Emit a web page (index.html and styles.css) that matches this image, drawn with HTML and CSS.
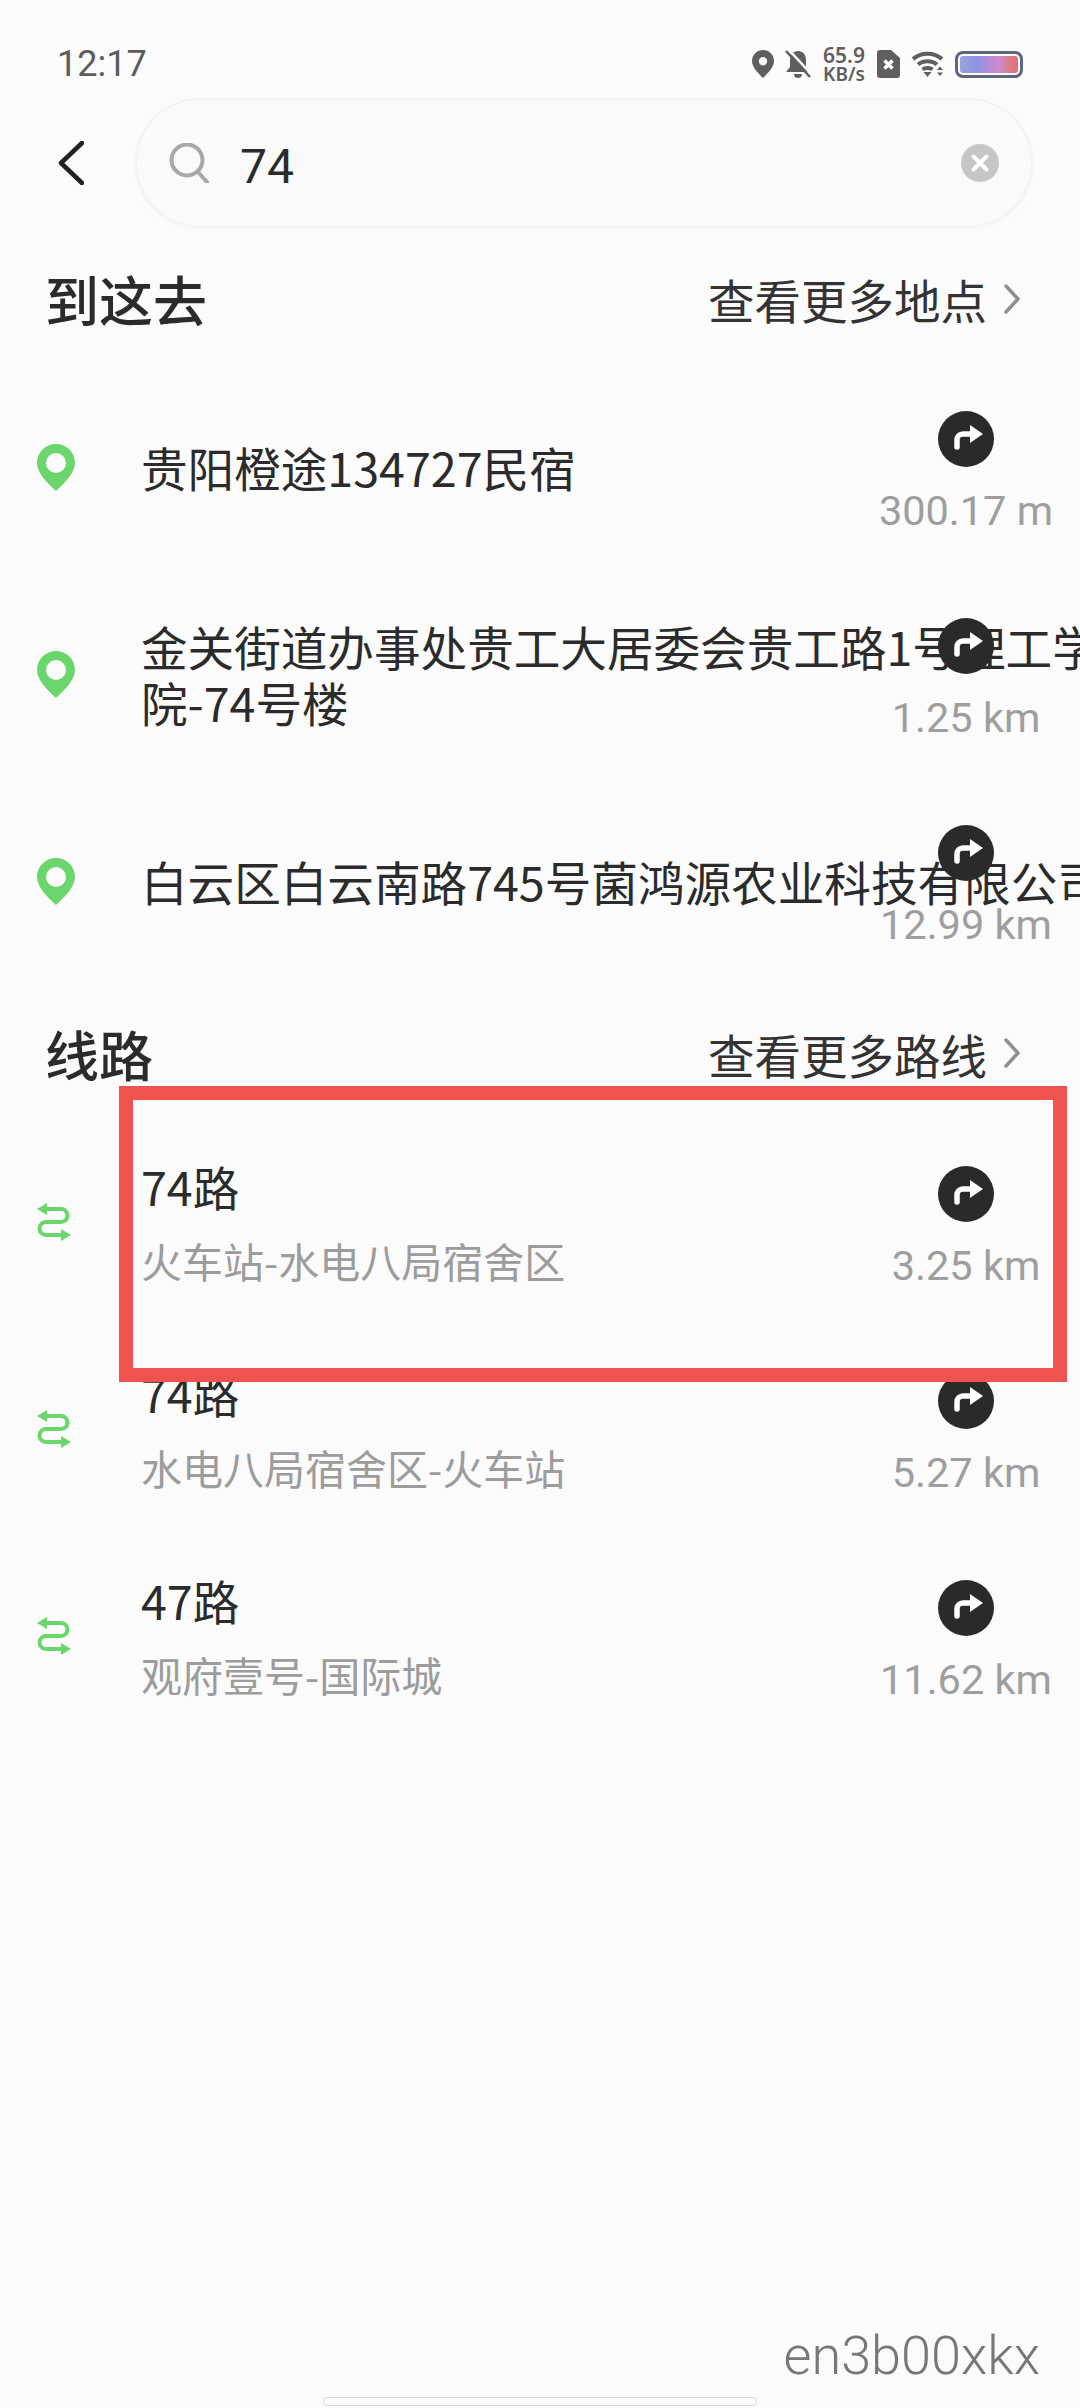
FILE: index.html
```html
<!DOCTYPE html>
<html lang="zh-CN">
<head>
  <meta charset="UTF-8" />
  <meta name="viewport" content="width=device-width, initial-scale=1" />
  <title>搜索</title>
  <link rel="stylesheet" href="styles.css">
</head>
<body>

  <svg class="sprites" width="0" height="0">
    <symbol id="pin" viewBox="0 0 38 47">
      <path fill-rule="evenodd" d="M19 0C8.5 0 0 8.2 0 18.8 0 30 12.5 41 19 47c6.5-6 19-17 19-28.2C38 8.2 29.5 0 19 0zm0 9a10 10 0 1 1 0 20 10 10 0 0 1 0-20z"/>
    </symbol>
    <symbol id="swap" viewBox="0 0 34 38">
      <path class="swap-line" d="M8 6h16a6.5 6.5 0 0 1 0 13H9a6.5 6.5 0 0 0 0 13h16"/>
      <path d="M0 6l10-6v12zM34 32l-10-6v12z"/>
    </symbol>
    <symbol id="go" viewBox="0 0 56 56">
      <circle cx="28" cy="28" r="28" fill="#2a2a2a"/>
      <path class="go-line" d="M19 36v-7a6 6 0 0 1 6-6h9"/>
      <path d="M32 14l13 9-13 9z" fill="#fff"/>
    </symbol>
    <symbol id="chev" viewBox="0 0 18 30">
      <path class="chev-line" d="M3 2l12 13L3 28"/>
    </symbol>
  </svg>

  <div class="page">
    <div class="statusbar">
      <span class="time">12:17</span>
      <div class="status-icons">
        <svg class="st-pin" viewBox="0 0 22 28"><path fill-rule="evenodd" d="M11 0C5 0 0 4.800 0 11c0 6.500 7 13 11 17 4-4 11-10.500 11-17C22 4.800 17 0 11 0zm0 7a4.200 4.200 0 1 1 0 8.400A4.200 4.200 0 0 1 11 7z"/></svg>
        <svg class="st-bell" viewBox="0 0 26 28"><path d="M13 1c-5 0-8 3.500-8 9v7l-4 5h24l-4-5v-7c0-5.500-3-9-8-9zM9 24a4 4 0 0 0 8 0z"/><path class="st-gap" d="M4 0l24 26"/><path class="st-slash" d="M1 1l24 26"/></svg>
        <div class="speed"><span class="speed-num">65.9</span><span class="speed-unit">KB/s</span></div>
        <svg class="st-sim" viewBox="0 0 23 28"><path d="M3 0h11l9 8v17a3 3 0 0 1-3 3H3a3 3 0 0 1-3-3V3a3 3 0 0 1 3-3z"/><path class="st-x" d="M7.500 10.500l8 8M15.500 10.500l-8 8"/></svg>
        <svg class="st-wifi" viewBox="0 0 33 26">
          <path class="st-arc" d="M2 8c8-7 21-7 29 0M7 13.500c5-4.500 14-4.500 19 0M11.500 18.500c2.500-2 7.500-2 10 0"/>
          <path d="M12.500 21h8l-4 5zM26 19l3-3.500 3 3.500zM26 21.500h6l-3 3.500z"/>
        </svg>
        <div class="battery"><div class="battery-fill"></div></div>
      </div>
    </div>

    <div class="search-row">
      <svg class="back" viewBox="0 0 26 44"><path d="M24 2L3 22l21 20"/></svg>
      <div class="search-box">
        <svg class="search-icon" viewBox="0 0 40 40"><circle cx="18" cy="17" r="15.500"/><path d="M29 29l9 10"/></svg>
        <span class="search-text">74</span>
        <svg class="clear-icon" viewBox="0 0 38 38"><circle cx="19" cy="19" r="19"/><path d="M12.500 12.500l13 13M25.500 12.500l-13 13"/></svg>
      </div>
    </div>

    <section class="section places">
      <div class="section-head">
        <h2>到这去</h2>
        <a class="more">查看更多地点<svg class="more-chev"><use href="#chev"/></svg></a>
      </div>
      <div class="row">
        <svg class="row-icon pin"><use href="#pin"/></svg>
        <div class="row-text"><div class="row-title">贵阳橙途134727民宿</div></div>
        <div class="row-side"><svg class="go"><use href="#go"/></svg><span class="dist">300.17 m</span></div>
      </div>
      <div class="row">
        <svg class="row-icon pin"><use href="#pin"/></svg>
        <div class="row-text"><div class="row-title">金关街道办事处贵工大居委会贵工路1号理工学<br>院-74号楼</div></div>
        <div class="row-side"><svg class="go"><use href="#go"/></svg><span class="dist">1.25 km</span></div>
      </div>
      <div class="row">
        <svg class="row-icon pin"><use href="#pin"/></svg>
        <div class="row-text"><div class="row-title">白云区白云南路745号菌鸿源农业科技有限公司</div></div>
        <div class="row-side"><svg class="go"><use href="#go"/></svg><span class="dist">12.99 km</span></div>
      </div>
    </section>

    <section class="section routes">
      <div class="section-head">
        <h2>线路</h2>
        <a class="more">查看更多路线<svg class="more-chev"><use href="#chev"/></svg></a>
      </div>
      <div class="row">
        <svg class="row-icon swap"><use href="#swap"/></svg>
        <div class="row-text"><div class="row-title">74路</div><div class="row-sub">火车站-水电八局宿舍区</div></div>
        <div class="row-side"><svg class="go"><use href="#go"/></svg><span class="dist">3.25 km</span></div>
      </div>
      <div class="row">
        <svg class="row-icon swap"><use href="#swap"/></svg>
        <div class="row-text"><div class="row-title">74路</div><div class="row-sub">水电八局宿舍区-火车站</div></div>
        <div class="row-side"><svg class="go"><use href="#go"/></svg><span class="dist">5.27 km</span></div>
      </div>
      <div class="row">
        <svg class="row-icon swap"><use href="#swap"/></svg>
        <div class="row-text"><div class="row-title">47路</div><div class="row-sub">观府壹号-国际城</div></div>
        <div class="row-side"><svg class="go"><use href="#go"/></svg><span class="dist">11.62 km</span></div>
      </div>
      <div class="highlight"></div>
    </section>

    <footer class="footer">
      <span class="watermark">en3b00xkx</span>
      <div class="home-bar"></div>
    </footer>
  </div>

</body>
</html>
```

FILE: styles.css
```css
* {
  margin: 0;
  padding: 0;
  box-sizing: border-box;
}
html, body {
  height: 100%;
  background: #fbfbfb;
  color: #2b2b2b;
  font-family: 'Noto Sans CJK SC', 'Noto Sans', sans-serif;
  overflow: hidden;
}
.sprites {
  position: absolute;
}
.page {
  display: flex;
  flex-direction: column;
  width: 1080px;
  height: 2408px;
}

/* status bar */
.statusbar {
  display: flex;
  align-items: center;
  justify-content: space-between;
  height: 98px;
  padding: 30px 57px 0;
}
.time {
  font-family: Roboto, sans-serif;
  font-size: 36px;
  color: #5c5c5c;
}
.status-icons {
  display: flex;
  align-items: center;
  gap: 11px;
  fill: #5f5f5f;
}
.st-pin { width: 22px; height: 28px; }
.st-bell { width: 26px; height: 28px; }
.st-gap {
  stroke: #fbfbfb;
  stroke-width: 2.500;
}
.st-slash {
  stroke: #5f5f5f;
  stroke-width: 2.500;
}
.speed {
  display: flex;
  flex-direction: column;
  align-items: center;
  width: 44px;
  font-family: 'Noto Sans', sans-serif;
  font-weight: 600;
  color: #5f5f5f;
}
.speed-num { font-size: 21px; line-height: 19px; }
.speed-unit { font-size: 19px; line-height: 18px; }
.st-sim { width: 23px; height: 28px; }
.st-x {
  stroke: #fff;
  stroke-width: 3.500;
}
.st-wifi { width: 33px; height: 26px; }
.st-arc {
  fill: none;
  stroke: #5f5f5f;
  stroke-width: 4;
}
.battery {
  width: 68px;
  height: 27px;
  padding: 2px;
  border: 3px solid #5e657c;
  border-radius: 8px;
}
.battery-fill {
  height: 100%;
  border-radius: 3px;
  background: linear-gradient(90deg, #97a6d8 0%, #8f90e6 30%, #b78ad8 50%, #cb8bcb 68%, #dc7c8a 85%, #df7272 100%);
}

/* search */
.search-row {
  display: flex;
  align-items: center;
  height: 130px;
  padding-left: 58px;
}
.back {
  width: 26px;
  height: 44px;
  margin-right: 51px;
  fill: none;
  stroke: #222;
  stroke-width: 4.500;
  stroke-linecap: round;
  stroke-linejoin: round;
}
.search-box {
  display: flex;
  align-items: center;
  width: 898px;
  height: 130px;
  padding: 0 32px;
  border: 2px solid #f3f3f3;
  border-radius: 65px;
  background: #fafafa;
  box-shadow: 0 2px 6px rgba(0,0,0,0.015);
}
.search-icon {
  width: 40px;
  height: 40px;
  fill: none;
  stroke: #a8a8a8;
  stroke-width: 4;
  stroke-linecap: round;
}
.search-text {
  flex: 1;
  margin-left: 31px;
  padding-top: 6px;
  font-family: Roboto, sans-serif;
  font-size: 48px;
  color: #2b2b2b;
}
.clear-icon {
  width: 38px;
  height: 38px;
  fill: #c6c6c6;
  stroke: none;
}
.clear-icon path {
  stroke: #fff;
  stroke-width: 4;
  stroke-linecap: round;
}

/* sections */
.section {
  position: relative;
  margin-top: 33px;
}
.routes {
  margin-top: 25px;
}
.section-head {
  display: flex;
  align-items: center;
  justify-content: space-between;
  height: 80px;
  margin-bottom: 27px;
  padding: 0 59px 0 45px;
}
.places .section-head {
  padding-bottom: 5px;
}
.routes .section-head {
  padding-bottom: 2px;
}
.section-head h2 {
  font-size: 54px;
  font-weight: 500;
  color: #2b2b2b;
}
.more {
  display: flex;
  align-items: center;
  font-size: 46.500px;
  color: #333;
}
.more-chev {
  width: 18px;
  height: 30px;
  margin-left: 16px;
}
.chev-line {
  fill: none;
  stroke: #8f8f8f;
  stroke-width: 3.500;
  stroke-linecap: round;
  stroke-linejoin: round;
}

/* rows */
.row {
  display: flex;
  align-items: center;
  height: 207px;
}
.row-icon {
  flex: none;
  margin-left: 37px;
}
.pin {
  width: 38px;
  height: 47px;
  margin-right: 66px;
  margin-bottom: 8px;
  fill: #6bd66b;
}
.swap {
  width: 34px;
  height: 38px;
  margin-right: 70px;
  margin-bottom: 6px;
  fill: #6bd66b;
}
.swap-line {
  fill: none;
  stroke: #6bd66b;
  stroke-width: 4;
}
.row-text {
  flex: 1;
  min-width: 0;
  margin-bottom: 10px;
  white-space: nowrap;
}
.routes .row-text {
  margin-bottom: 6px;
}
.row-title {
  font-size: 46.600px;
  line-height: 56px;
  color: #2b2b2b;
}
.row-sub {
  margin-top: 21px;
  font-size: 41px;
  line-height: 50px;
  color: #9c9c9c;
}
.row-side {
  position: relative;
  z-index: 1;
  flex: none;
  display: flex;
  flex-direction: column;
  align-items: center;
  gap: 23px;
  width: 190px;
  margin-right: 19px;
}
.routes .row-side {
  margin-top: 3px;
}
.go {
  width: 56px;
  height: 56px;
}
.go-line {
  fill: none;
  stroke: #fff;
  stroke-width: 5.500;
  stroke-linecap: round;
}
.dist {
  font-family: Roboto, sans-serif;
  font-size: 41.500px;
  line-height: 42px;
  color: #9e9e9e;
  white-space: nowrap;
}

/* red annotation box drawn over the first route row */
.highlight {
  position: absolute;
  left: 119px;
  top: 72px;
  width: 948px;
  height: 296px;
  border: 14px solid #f0524f;
  z-index: 2;
}

/* footer */
.footer {
  display: flex;
  flex-direction: column;
  margin-top: auto;
}
.watermark {
  align-self: flex-end;
  margin-right: 40px;
  font-family: Roboto, sans-serif;
  font-size: 54px;
  font-weight: 300;
  line-height: 60px;
  color: #777;
}
.home-bar {
  align-self: center;
  width: 434px;
  height: 9px;
  margin: 11px 0 2px;
  border: 1px solid #dcdcdc;
  border-radius: 5px;
  background: #fcfcfc;
}
```
